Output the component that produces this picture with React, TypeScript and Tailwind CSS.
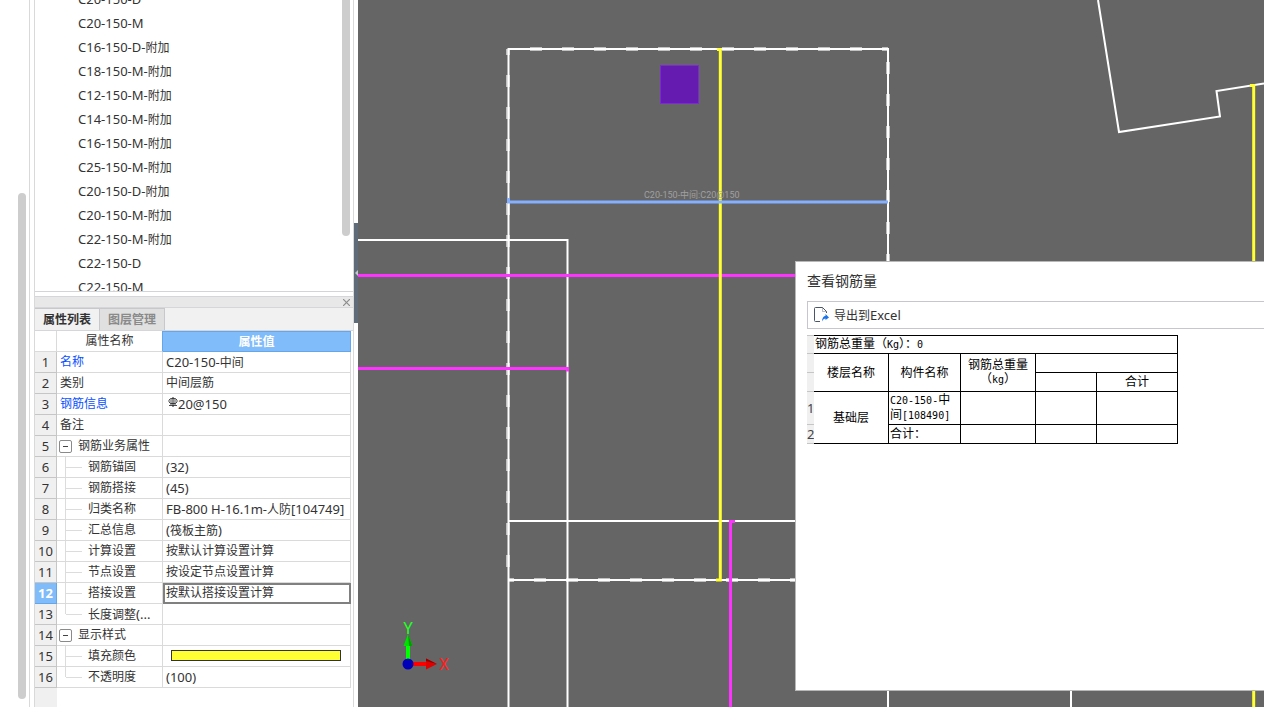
import { clsx } from "clsx";
import React from "react";

const treeItems = [
  "C20-150-D",
  "C20-150-M",
  "C16-150-D-附加",
  "C18-150-M-附加",
  "C12-150-M-附加",
  "C14-150-M-附加",
  "C16-150-M-附加",
  "C25-150-M-附加",
  "C20-150-D-附加",
  "C20-150-M-附加",
  "C22-150-M-附加",
  "C22-150-D",
  "C22-150-M",
];

interface Property {
  name: string,
  value?: string,
  kind?: "link" | "group" | "child" | "lastChild",
  rebar?: boolean,
  color?: boolean,
  selected?: boolean,
}

const properties: Property[] = [
  { name: "名称", value: "C20-150-中间", kind: "link" },
  { name: "类别", value: "中间层筋" },
  { name: "钢筋信息", value: "20@150", kind: "link", rebar: true },
  { name: "备注" },
  { name: "钢筋业务属性", kind: "group" },
  { name: "钢筋锚固", value: "(32)", kind: "child" },
  { name: "钢筋搭接", value: "(45)", kind: "child" },
  { name: "归类名称", value: "FB-800 H-16.1m-人防[104749]", kind: "child" },
  { name: "汇总信息", value: "(筏板主筋)", kind: "child" },
  { name: "计算设置", value: "按默认计算设置计算", kind: "child" },
  { name: "节点设置", value: "按设定节点设置计算", kind: "child" },
  { name: "搭接设置", value: "按默认搭接设置计算", kind: "child", selected: true },
  { name: "长度调整(...", kind: "lastChild" },
  { name: "显示样式", kind: "group" },
  { name: "填充颜色", kind: "child", color: true },
  { name: "不透明度", value: "(100)", kind: "lastChild" },
];

interface MixedTextProps {
  text: string,
  latin?: string,
}

// Latin runs take their own size next to the 12px Chinese glyphs
const MixedText: React.FC<MixedTextProps> = ({ text, latin = "text-[13px]" }) => (
  <>
    {text.split(/([\u2e80-\uffef]+)/).filter(Boolean).map((part, index) => (
      // eslint-disable-next-line react/no-array-index-key
      <span key={index} className={/[\u2e80-\uffef]/.test(part) ? undefined : latin}>{part}</span>
    ))}
  </>
);

const RebarSymbol: React.FC = () => (
  <svg className="mb-1 ml-[2px] shrink-0" width="10" height="10" viewBox="0 0 10 10" fill="none" stroke="#222">
    <path d="M5 0v10" />
    <path d="M3 2v6M7 2v6" strokeWidth=".8" />
    <path d="M2.500 1.500H7.500L9 3V5L7.500 6.500H2.500L1 5V3Z" strokeWidth=".8" />
    <path d="M1 8.500H9" strokeWidth=".8" />
  </svg>
);

const TreePanel: React.FC = () => (
  <div className="relative h-[292px] shrink-0 overflow-hidden border-b border-[#d4d4d8]">
    <ul className="-mt-[13px] pl-[43px] text-xs leading-6">
      {treeItems.map((item) => (
        <li key={item} className="h-6 whitespace-nowrap"><MixedText text={item} /></li>
      ))}
    </ul>
    <div className="absolute -top-2 right-[3px] h-[244px] w-2 rounded-full bg-[#cdcdcd]"></div>
  </div>
);

const PropertyName: React.FC<{ property: Property }> = ({ property }) => {
  const { name, kind } = property;

  if (kind === "group") {
    return (
      <div className="flex h-5 items-center pl-[2px]">
        <button
          type="button"
          aria-label="折叠"
          className="flex size-[13px] items-center justify-center rounded-[2px] border border-[#8a8a8a] bg-white"
        >
          <span className="h-px w-[5px] bg-[#444]"></span>
        </button>
        <span className="ml-[6px]">{name}</span>
      </div>
    );
  }

  if (kind === "child" || kind === "lastChild") {
    return (
      <div className="flex h-5 items-center pl-2">
        <span className={clsx("w-px bg-[#dcdcdc]", kind === "child" ? "h-5" : "h-[10px] self-start")}></span>
        <span className="h-px w-4 bg-[#dcdcdc]"></span>
        <span className="ml-[6px]"><MixedText text={name} /></span>
      </div>
    );
  }

  return <span className={clsx("pl-[3px]", kind === "link" && "text-[#0a50ff]")}>{name}</span>;
};

const PropertyTable: React.FC = () => (
  <table className="w-[316px] shrink-0 table-fixed border-separate border-spacing-0 text-xs leading-[18px]">
    <colgroup>
      <col className="w-[22px]" />
      <col className="w-[106px]" />
      <col />
    </colgroup>
    <thead>
      <tr className="h-[21px]">
        <th className="border-r border-b border-[#dadada] p-0"></th>
        <th className="border-r border-b border-r-[#65a5ea] border-b-[#dadada] p-0 font-normal">属性名称</th>
        <th className="border-y border-r border-[#65a5ea] bg-[#80bbfa] p-0 font-bold text-white">属性值</th>
      </tr>
    </thead>
    <tbody>
      {properties.map((property, index) => (
        <tr key={property.name} className="h-[21px]">
          <th
            className={clsx(
              "border-r border-b p-0 text-[13px]",
              property.selected
                ? "border-[#65a5ea] bg-[#80bbfa] font-bold text-white"
                : "border-[#c6c6c6] bg-[#f0f0f0] font-normal",
            )}
          >
            {index + 1}
          </th>
          <td className="border-r border-b border-[#dadada] p-0 whitespace-nowrap">
            <PropertyName property={property} />
          </td>
          <td
            className={clsx(
              "border-r border-b border-[#dadada] p-0 pl-[3px] whitespace-nowrap",
              property.selected && "outline-2 -outline-offset-2 outline-[#808080]",
            )}
          >
            <div className="flex h-5 items-center">
              {property.rebar ? <RebarSymbol /> : null}
              {property.value != null ? <span className="whitespace-pre"><MixedText text={property.value} /></span> : null}
              {property.color ? <div className="mr-[9px] mb-px ml-[5px] h-[11px] flex-1 border border-[#333] bg-[#ffff33]"></div> : null}
            </div>
          </td>
        </tr>
      ))}
    </tbody>
  </table>
);

const PropertyPanel: React.FC = () => (
  <section className="mt-1 flex min-h-0 flex-1 flex-col overflow-hidden">
    <div className="flex h-3 shrink-0 items-center justify-end border-y border-[#d6d6da] bg-[#e8e8e8] pr-[3px]">
      <button type="button" aria-label="关闭">
        <svg width="7" height="7" viewBox="0 0 7 7" stroke="#8c8c8c" strokeWidth="1.2"><path d="M0 0l7 7M7 0L0 7" /></svg>
      </button>
    </div>
    <div className="flex h-[23px] shrink-0 border-b border-[#d6d6da] bg-[#f1f1f1] text-xs font-bold" role="tablist">
      <button type="button" role="tab" aria-selected="true" className="w-[65px] border-t border-r border-[#c8c8cc] bg-[#f1f1f1]">
        属性列表
      </button>
      <button type="button" role="tab" aria-selected="false" className="w-[65px] border-t border-r border-[#c8c8cc] bg-[#e0e0e0] text-[#8a8a8a]">
        图层管理
      </button>
    </div>
    <PropertyTable />
    <div className="w-[22px] flex-1 bg-[#f0f0f0]"></div>
  </section>
);

const DrawingCanvas: React.FC = () => (
  <svg className="block size-full" fill="none">
    <g stroke="#ffffff" strokeWidth="2">
      <path d="M740 0L761 132L862 116.500L858.500 91L906 83.500" />
      <path d="M0 240H209.500V707M150 521H530M713 600V707" />
      <path d="M150.500 707V49H530V707M150.500 580H530" />
    </g>
    <g stroke="#ffffff" strokeOpacity="0.6" strokeWidth="4" strokeDasharray="12 20">
      <path d="M172 49H530" />
      <path d="M150 49V580" strokeDashoffset="6" />
      <path d="M150 580H530" strokeDashoffset="6" />
      <path d="M530 62V580" />
    </g>
    <rect x="302.500" y="65.500" width="38" height="38" fill="#651ab0" stroke="#7d2ad6" />
    <g stroke="#ff33ff" strokeWidth="3">
      <path d="M0 275.500H530" />
      <path d="M0 368.500H209.500v3" />
      <path d="M377 521.500H372.500V707" />
    </g>
    <g stroke="#ffff33" strokeWidth="3">
      <path d="M359 49.500H362.300V580H358" />
      <path d="M892 85.500H895.700V707" />
    </g>
    <text x="286" y="198" fontSize="9" fill="#a0a0a0" fontFamily="Roboto, 'Noto Sans CJK SC', sans-serif">C20-150-中间:C20@150</text>
    <path d="M150.500 198V202H530" stroke="#85b0ff" strokeWidth="3" />
    <AxisGizmo />
  </svg>
);

const AxisGizmo: React.FC = () => (
  <g>
    <path d="M50 660V645" stroke="#00ff00" strokeWidth="4" />
    <path d="M50 634L54.500 646H45.500Z" fill="#00e000" />
    <path d="M50 634L54.500 646H51Z" fill="#00a000" />
    <path d="M54 664H69" stroke="#ff0000" strokeWidth="4" />
    <path d="M79 664L68 658.500V669.500Z" fill="#e00000" />
    <path d="M79 664L68 658.500V661Z" fill="#900000" />
    <circle cx="50" cy="664" r="5.500" fill="#0000bb" />
    <g fontFamily="Roboto, sans-serif" fontSize="16" textAnchor="middle">
      <text x="50" y="634" fill="#22ff22">Y</text>
      <text x="86" y="670" fill="#ff2222">X</text>
    </g>
  </g>
);

const cell = "border-r border-b border-black p-0 font-normal";
const rowHeader = "overflow-hidden border-b border-[#c6c6c6] bg-[#f0f0f0] p-0 font-normal";

const RebarTable: React.FC = () => {
  const mono = (text: string) => <MixedText text={text} latin="font-['DejaVu_Sans_Mono'] text-[10px]" />;

  return (
    <table className="mt-[6px] ml-[11px] w-[371px] table-fixed border-separate border-spacing-0 text-xs leading-[14px] text-black">
      <colgroup>
        <col className="w-[7px]" />
        <col className="w-[75px]" />
        <col className="w-[72px]" />
        <col className="w-[75px]" />
        <col className="w-[61px]" />
        <col className="w-[81px]" />
      </colgroup>
      <tbody>
        <tr className="h-[19px]">
          <th className={clsx(rowHeader, "border-t")}></th>
          <td colSpan={5} className={clsx(cell, "border-t pl-px")}>{mono("钢筋总重量（Kg）：0")}</td>
        </tr>
        <tr className="h-[19px]">
          <th className={rowHeader}></th>
          <th rowSpan={2} className={cell}>楼层名称</th>
          <th rowSpan={2} className={cell}>构件名称</th>
          <th rowSpan={2} className={cell}>
            钢筋总重量
            <br />
            {mono("（kg）")}
          </th>
          <th colSpan={2} className={cell}></th>
        </tr>
        <tr className="h-[19px]">
          <th className={rowHeader}></th>
          <th className={cell}></th>
          <th className={cell}>合计</th>
        </tr>
        <tr className="h-[33px]">
          <th className={clsx(rowHeader, "text-[13px] text-[#444]")}>1</th>
          <td rowSpan={2} className={clsx(cell, "text-center")}>基础层</td>
          <td className={clsx(cell, "pl-px")}>
            {mono("C20-150-中")}
            <br />
            {mono("间[108490]")}
          </td>
          <td className={cell}></td>
          <td className={cell}></td>
          <td className={cell}></td>
        </tr>
        <tr className="h-[19px]">
          <th className={clsx(rowHeader, "text-[13px] text-[#444]")}>2</th>
          <td className={clsx(cell, "pl-px")}>合计：</td>
          <td className={cell}></td>
          <td className={cell}></td>
          <td className={cell}></td>
        </tr>
      </tbody>
    </table>
  );
};

const ExportIcon: React.FC = () => (
  <svg width="16" height="16" viewBox="0 0 16 16" fill="none">
    <path d="M7 14.500H2.500Q1.500 14.500 1.500 13.500V1.500Q1.500 .5 2.500 .5H9.500L13.500 4.500V6" stroke="#4a5568" />
    <path d="M9.500 .5V4.500H13.500" stroke="#4a5568" strokeOpacity=".4" />
    <path d="M9 14.500C9 11 10.500 9 12.500 9V7L16 10.500L12.500 13V11.500C11 11.500 10 12.500 9 14.500Z" fill="#1a73e8" />
  </svg>
);

const RebarDialog: React.FC = () => (
  <div
    role="dialog"
    aria-labelledby="rebar-dialog-title"
    className="absolute top-[261px] right-0 bottom-4 left-[437px] overflow-hidden border-y border-l border-[#b8b8b8] bg-white"
  >
    <h2 id="rebar-dialog-title" className="px-[11px] pt-[7px] pb-2 text-sm leading-6">查看钢筋量</h2>
    <div className="ml-[11px] flex h-7 items-center border-y border-l border-[#c6c6cc] pl-[5px]">
      <button type="button" className="flex items-center gap-[5px] text-xs leading-5">
        <ExportIcon />
        <span><MixedText text="导出到Excel" /></span>
      </button>
    </div>
    <RebarTable />
  </div>
);

export default function App() {
  return (
    <div className="flex h-screen overflow-hidden bg-white font-['Noto_Sans','Noto_Sans_CJK_SC',sans-serif] text-[#333]">
      <div className="flex w-[30px] shrink-0 justify-end border-r border-[#d9d9d9] pt-[193px] pr-[3px] pb-2">
        <div className="w-2 rounded-full bg-[#cdcdcd]"></div>
      </div>
      <aside className="ml-1 flex w-80 shrink-0 flex-col border-x border-[#d9d9d9]">
        <TreePanel />
        <PropertyPanel />
      </aside>
      <div className="w-1 shrink-0 pt-[223px]">
        <button type="button" aria-label="收起" className="flex h-25 w-1 items-center justify-end bg-[#5f6b79]">
          <svg width="3" height="6" viewBox="0 0 3 6" fill="#c4c8ce"><path d="M3 0V6L0 3Z" /></svg>
        </button>
      </div>
      <main className="relative min-w-0 flex-1 bg-[#656565]">
        <DrawingCanvas />
        <RebarDialog />
      </main>
    </div>
  );
}
